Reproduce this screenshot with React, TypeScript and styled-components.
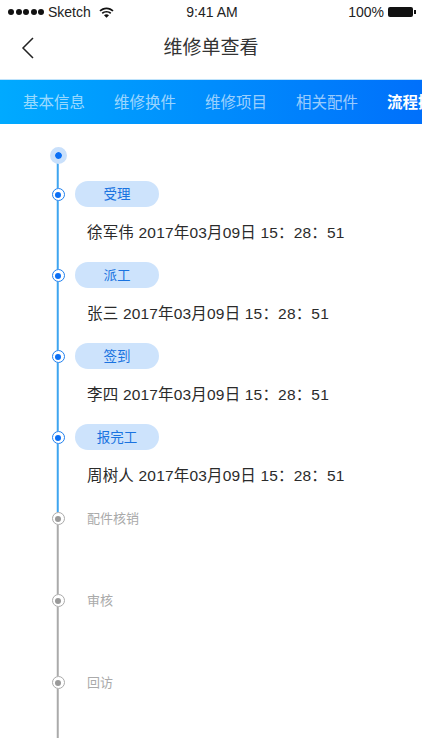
import React from "react";
import styled, { createGlobalStyle } from "styled-components";

const FONT = `"Liberation Sans", "Noto Sans CJK SC", sans-serif`;

type Step = {
  title: string;
  person?: string;
  height: number;
};

const TABS = ["基本信息", "维修换件", "维修项目", "相关配件", "流程操作"];

const DONE_TIME = "2017年03月09日 15：28：51";

const DONE_STEPS: Step[] = [
  { title: "受理", person: "徐军伟", height: 81 },
  { title: "派工", person: "张三", height: 81 },
  { title: "签到", person: "李四", height: 81 },
  { title: "报完工", person: "周树人", height: 81 },
];

const TODO_STEPS: Step[] = [
  { title: "配件核销", height: 82 },
  { title: "审核", height: 82 },
  { title: "回访", height: 62 },
];

const App: React.FC = () => {
  return (
    <Page>
      <GlobalStyle />
      <StatusBar>
        <StatusLeft>
          <Signal>
            <i />
            <i />
            <i />
            <i />
            <i />
          </Signal>
          <span>Sketch</span>
          <svg width="15" height="11" viewBox="0 0 15 11">
            <path
              d="M7.5 0.5C4.7 0.5 2.2 1.6 0.4 3.4L1.6 4.6C3.1 3.1 5.2 2.2 7.5 2.2S11.9 3.1 13.4 4.6L14.6 3.4C12.8 1.6 10.3 0.5 7.5 0.5ZM7.5 3.9C5.6 3.9 3.9 4.6 2.7 5.8L3.9 7C4.8 6.1 6.1 5.6 7.5 5.6S10.2 6.1 11.1 7L12.3 5.8C11.1 4.6 9.4 3.9 7.5 3.9ZM7.5 7.2C6.5 7.2 5.7 7.6 5 8.2L7.5 10.8L10 8.2C9.3 7.6 8.5 7.2 7.5 7.2Z"
              fill="#111"
            />
          </svg>
        </StatusLeft>
        <StatusTime>9:41 AM</StatusTime>
        <StatusRight>
          <span>100%</span>
          <Battery />
        </StatusRight>
      </StatusBar>
      <NavBar>
        <BackButton>
          <svg width="14" height="22" viewBox="0 0 14 22" fill="none">
            <path d="M12 1 L2 11 L12 21" stroke="#222" strokeWidth="1.5" />
          </svg>
        </BackButton>
        <NavTitle>维修单查看</NavTitle>
      </NavBar>
      <TabBar>
        {TABS.map((tab, i) => (
          <Tab key={tab} active={i === TABS.length - 1}>
            {tab}
          </Tab>
        ))}
      </TabBar>
      <Timeline>
        <StartRow>
          <StartDot />
          <LineSegment done />
        </StartRow>
        {DONE_STEPS.map((step) => (
          <StepRow key={step.title} style={{ height: step.height }}>
            <Marker>
              <MarkerRing done />
              <LineSegment done />
            </Marker>
            <StepBody>
              <Pill>{step.title}</Pill>
              <Detail>
                {step.person} {DONE_TIME}
              </Detail>
            </StepBody>
          </StepRow>
        ))}
        {TODO_STEPS.map((step) => (
          <StepRow key={step.title} style={{ height: step.height }}>
            <Marker>
              <MarkerRing />
              <LineSegment />
            </Marker>
            <TodoLabel>{step.title}</TodoLabel>
          </StepRow>
        ))}
      </Timeline>
    </Page>
  );
};

export default App;

const GlobalStyle = createGlobalStyle`
  html, body {
    margin: 0;
    padding: 0;
    background: #fff;
  }
`;

const Page = styled.div`
  width: 422px;
  height: 750px;
  overflow: hidden;
  background: #fff;
  font-family: ${FONT};
  color: #222;
`;

const StatusBar = styled.div`
  height: 24px;
  padding: 0 6px 0 8px;
  display: grid;
  grid-template-columns: 1fr auto 1fr;
  align-items: center;
  font-size: 14px;
  color: #222;
`;

const StatusLeft = styled.div`
  display: flex;
  align-items: center;
  gap: 4px;

  & svg {
    margin-left: 4px;
  }
`;

const Signal = styled.div`
  display: flex;
  gap: 1.5px;

  & i {
    width: 6px;
    height: 6px;
    border-radius: 50%;
    background: #111;
  }
`;

const StatusTime = styled.div`
  text-align: center;
`;

const StatusRight = styled.div`
  display: flex;
  justify-content: flex-end;
  align-items: center;
  gap: 4px;
`;

const Battery = styled.div`
  width: 25px;
  height: 10px;
  background: #111;
  border-radius: 2px;
  margin-right: 3px;
  position: relative;

  &::after {
    content: "";
    position: absolute;
    right: -3px;
    top: 3px;
    width: 2px;
    height: 4px;
    background: #111;
  }
`;

const NavBar = styled.div`
  height: 55px;
  display: flex;
  align-items: center;
  justify-content: center;
  position: relative;
`;

const BackButton = styled.div`
  position: absolute;
  left: 21px;
  top: 13px;
  height: 22px;
`;

const NavTitle = styled.div`
  font-size: 19px;
  color: #333;
  margin-bottom: 12px;
`;

const TabBar = styled.div`
  height: 45px;
  display: flex;
  align-items: center;
  gap: 29px;
  padding-left: 23px;
  padding-bottom: 2px;
  overflow: hidden;
  background: linear-gradient(90deg, #00aaff 0%, #0070fb 100%);
  border-top: 1px solid #bfe3fb;
  box-sizing: border-box;
`;

const Tab = styled.div<{ active?: boolean }>`
  flex: none;
  font-size: 15.5px;
  font-weight: ${(p) => (p.active ? 700 : 400)};
  color: ${(p) => (p.active ? "#fff" : "rgba(255, 255, 255, 0.62)")};
`;

const Timeline = styled.div`
  padding: 24px 0 0 51px;
`;

const StartRow = styled.div`
  width: 14px;
  height: 40px;
  display: flex;
  flex-direction: column;
  align-items: center;
`;

const StartDot = styled.div`
  flex: none;
  width: 17px;
  height: 17px;
  margin: -1px 0 -6px;
  box-sizing: border-box;
  border-radius: 50%;
  background: #0a6ff5;
  border: 5px solid #c9e0fb;
  background-clip: padding-box;
  position: relative;
  z-index: 1;
`;

const StepRow = styled.div`
  display: flex;
  align-items: flex-start;
`;

const Marker = styled.div`
  flex: none;
  width: 14px;
  height: 100%;
  display: flex;
  flex-direction: column;
  align-items: center;
`;

const LineSegment = styled.div<{ done?: boolean }>`
  flex: 1;
  width: 1.5px;
  transform: translateX(-0.25px);
  background: ${(p) => (p.done ? "#3fa5f0" : "#aaa")};
`;

const MarkerRing = styled.div<{ done?: boolean }>`
  flex: none;
  width: 13px;
  height: 13px;
  box-sizing: border-box;
  border-radius: 50%;
  border: 1.5px solid ${(p) => (p.done ? "#1f80ee" : "#aaa")};
  background: #fff;
  display: flex;
  align-items: center;
  justify-content: center;

  &::after {
    content: "";
    width: 6px;
    height: 6px;
    border-radius: 50%;
    background: ${(p) => (p.done ? "#0a6ff5" : "#999")};
  }
`;

const StepBody = styled.div`
  display: flex;
  flex-direction: column;
  align-items: flex-start;
  margin-left: 10px;
  margin-top: -7px;
`;

const Pill = styled.div`
  width: 84px;
  height: 26px;
  padding-bottom: 2px;
  box-sizing: border-box;
  border-radius: 13px;
  background: #cde3fc;
  color: #1a73e0;
  font-size: 13.5px;
  display: flex;
  align-items: center;
  justify-content: center;
`;

const Detail = styled.div`
  margin: 16px 0 0 12px;
  font-size: 15.5px;
  line-height: 20px;
  letter-spacing: 0.18px;
  white-space: nowrap;
  color: #2b2b2b;
`;

const TodoLabel = styled.div`
  margin: -2px 0 0 22px;
  font-size: 13px;
  line-height: 18px;
  color: #aaa;
`;
